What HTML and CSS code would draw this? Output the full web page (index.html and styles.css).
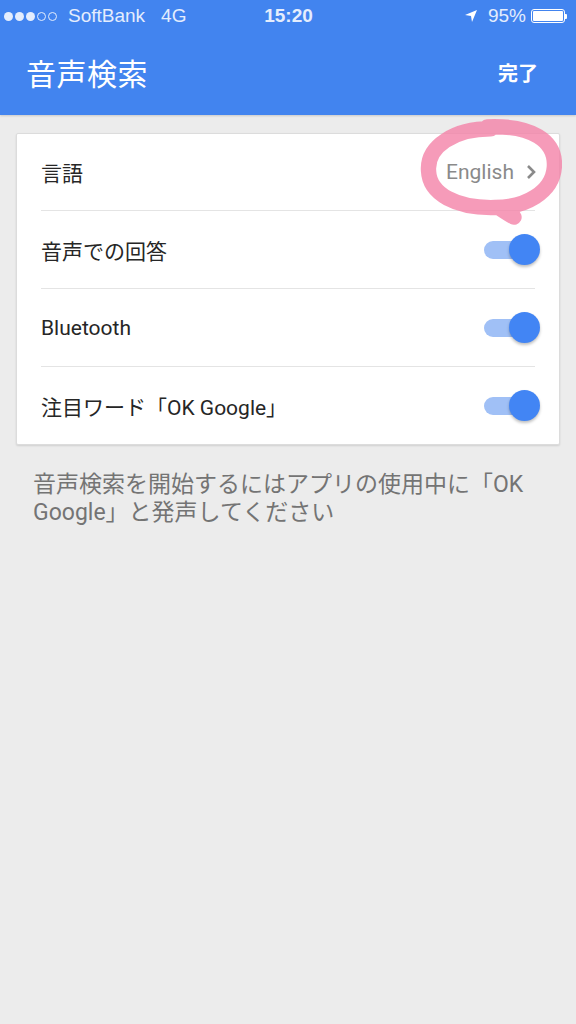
FILE: index.html
```html
<!DOCTYPE html>
<html lang="ja">
<head>
    <meta charset="UTF-8">
    <meta name="viewport" content="width=device-width, initial-scale=1.0">
    <title>音声検索</title>
    <link rel="stylesheet" href="styles.css">
</head>
<body>
    <div class="topbar">
        <div class="status">
            <div class="status-left">
                <span class="signal">
                    <i class="dot"></i><i class="dot"></i><i class="dot"></i><i class="dot empty"></i><i class="dot empty"></i>
                </span>
                <span>SoftBank</span>
                <span class="net">4G</span>
            </div>
            <div class="status-time">15:20</div>
            <div class="status-right">
                <svg class="loc" width="14" height="14" viewBox="0 0 14 14"><path d="M13 1 L1 6 L7 7 L8 13 Z" fill="#fff"/></svg>
                <span>95%</span>
                <span class="battery"><span class="battery-fill"></span></span>
                <span class="battery-tip"></span>
            </div>
        </div>
        <div class="header">
            <h1>音声検索</h1>
            <a class="done">完了</a>
        </div>
    </div>

    <div class="content">
        <div class="card">
            <div class="row">
                <span class="label">言語</span>
                <span class="value">English
                    <svg width="12" height="18" viewBox="0 0 12 18"><path d="M3 3 L9 9 L3 15" fill="none" stroke="#8a8a8a" stroke-width="2.6"/></svg>
                </span>
                <svg class="scribble" width="144" height="108" viewBox="0 0 150 110">
                    <path d="M72 8 C118 6 144 22 142 50 C140 76 112 92 80 92 C40 93 12 78 11 54 C9 28 38 10 76 10 M84 92 C90 96 96 100 100 102" fill="none" stroke="rgba(244,130,168,0.8)" stroke-width="16" stroke-linecap="round"/>
                </svg>
            </div>
            <div class="row">
                <span class="label">音声での回答</span>
                <span class="toggle on"><span class="knob"></span></span>
            </div>
            <div class="row">
                <span class="label">Bluetooth</span>
                <span class="toggle on"><span class="knob"></span></span>
            </div>
            <div class="row">
                <span class="label">注目ワード「OK Google」</span>
                <span class="toggle on"><span class="knob"></span></span>
            </div>
        </div>
        <p class="note">音声検索を開始するにはアプリの使用中に「OK Google」と発声してください</p>
    </div>
</body>
</html>
```
FILE: styles.css
```css
body {
    margin: 0;
    background-color: #ececec;
    font-family: Roboto, "Noto Sans CJK JP", sans-serif;
    height: 1024px;
    overflow: hidden;
}
.topbar {
    background-color: #4284ef;
    color: #fff;
    height: 115px;
    box-shadow: 0 1px 2px rgba(0, 0, 0, 0.15);
}
.status {
    height: 32px;
    display: grid;
    grid-template-columns: 1fr auto 1fr;
    align-items: center;
    padding: 0 9px 0 4px;
    font-family: "Liberation Sans", "Noto Sans CJK JP", sans-serif;
    font-size: 19px;
    color: #e4edfd;
}
.status-left {
    display: flex;
    align-items: center;
}
.signal {
    display: flex;
    gap: 2px;
    margin-right: 11px;
}
.dot {
    width: 9px;
    height: 9px;
    border-radius: 50%;
    background: #e4edfd;
    box-sizing: border-box;
}
.dot.empty {
    background: none;
    border: 1px solid #e4edfd;
}
.net {
    margin-left: 16px;
}
.status-time {
    font-weight: bold;
    font-size: 19px;
    position: relative;
    left: 3px;
}
.status-right {
    display: flex;
    align-items: center;
    justify-content: flex-end;
    gap: 8px;
}
.loc {
    margin-right: 2px;
}
.battery {
    width: 34px;
    height: 14px;
    border: 1.5px solid #fff;
    border-radius: 3px;
    padding: 1px;
    box-sizing: border-box;
    display: inline-flex;
    margin-left: -3px;
}
.battery-fill {
    flex: 1;
    background: #fff;
    border-radius: 1px;
}
.battery-tip {
    width: 2px;
    height: 5px;
    background: #fff;
    margin-left: -8px;
    border-radius: 0 1px 1px 0;
}
.header {
    height: 83px;
    display: flex;
    align-items: center;
    justify-content: space-between;
    padding: 0 38px 0 26px;
    box-sizing: border-box;
}
h1 {
    margin: 0;
    font-weight: normal;
    font-size: 30px;
    letter-spacing: 0.5px;
    padding-bottom: 4px;
}
.done {
    font-size: 20px;
    font-weight: bold;
    padding-bottom: 2px;
}
.content {
    padding: 18px 16px 0 16px;
}
.card {
    background: #fff;
    border: 1px solid #dcdcdc;
    border-radius: 2px;
    box-shadow: 0 1px 2px rgba(0, 0, 0, 0.12);
    padding: 0 24px;
}
.row {
    height: 77px;
    display: flex;
    align-items: center;
    justify-content: space-between;
    border-bottom: 1px solid #e4e4e4;
    position: relative;
}
.row:first-child {
    height: 76px;
}
.row:last-child {
    border-bottom: none;
}
.label {
    font-size: 21px;
    color: #262626;
}
.value {
    font-size: 21px;
    color: #8a8a8a;
    display: flex;
    align-items: center;
    gap: 11px;
    margin-right: -2px;
}
.scribble {
    position: absolute;
    right: -27px;
    top: -16px;
}
.toggle {
    width: 46px;
    height: 18px;
    border-radius: 9px;
    background: #a0c0f6;
    position: relative;
    margin-right: 5px;
}
.knob {
    position: absolute;
    width: 31px;
    height: 31px;
    border-radius: 50%;
    background: #4285f4;
    right: -10px;
    top: -6.5px;
    box-shadow: 0 2px 3px rgba(0, 0, 0, 0.25);
}
.note {
    margin: 26px 0 0 17px;
    padding-right: 20px;
    font-size: 23px;
    line-height: 28px;
    color: #747474;
}
```
